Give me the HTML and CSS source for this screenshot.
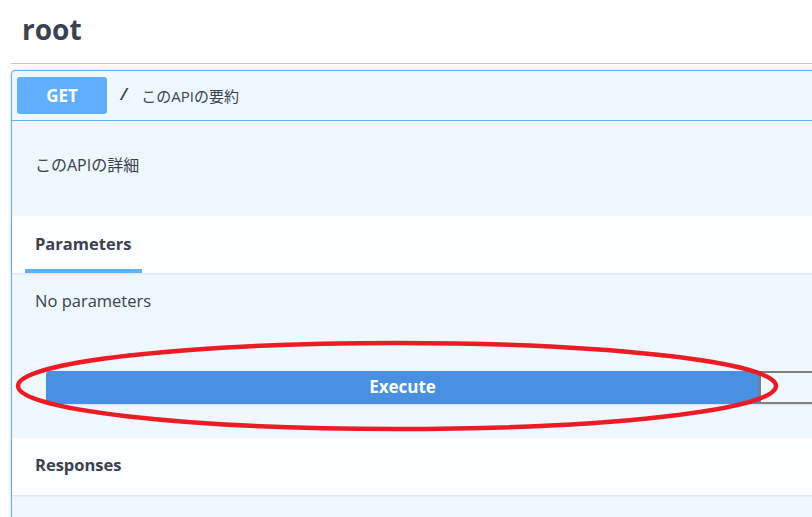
FILE: index.html
```html
<!DOCTYPE html>
<html lang="ja">
<head>
<meta charset="utf-8">
<title>root</title>
<link rel="stylesheet" href="styles.css">
</head>
<body>
<div class="page">
  <div class="tag">
    <h3 class="tag-title">root</h3>
  </div>
  <div class="opblock">
    <div class="summary">
      <span class="method">GET</span>
      <span class="path">/</span>
      <span class="summary-desc">このAPIの要約</span>
    </div>
    <div class="op-body">
      <div class="desc">
        <p>このAPIの詳細</p>
      </div>
      <div class="section-header">
        <div class="tab active"><h4>Parameters</h4></div>
      </div>
      <div class="params">
        <p>No parameters</p>
      </div>
      <div class="btn-group">
        <button class="btn execute">Execute</button>
        <button class="btn clear">Clear</button>
      </div>
      <div class="section-header responses-header">
        <h4 class="plain">Responses</h4>
      </div>
      <div class="responses"></div>
    </div>
  </div>
</div>
<svg class="annotation" width="812" height="517" viewBox="0 0 812 517">
  <ellipse cx="397" cy="386" rx="379" ry="43" fill="none" stroke="#ed1c24" stroke-width="4.5"/>
</svg>
</body>
</html>
```

FILE: styles.css
```css
html, body {
  margin: 0;
  padding: 0;
  background: #ffffff;
  overflow: hidden;
}

body {
  width: 812px;
  height: 517px;
  position: relative;
  font-family: "Open Sans", "Noto Sans CJK JP", sans-serif;
  color: #3b4151;
}

.page {
  width: 1496px;
  padding-left: 11px;
}

.tag {
  border-bottom: 1px solid #c4c6cb;
  padding: 12px 0 17px 11px;
  margin-bottom: 6px;
}

.tag-title {
  margin: 0;
  font-size: 28px;
  line-height: 34px;
  font-weight: 700;
  color: #3b4151;
}

.opblock {
  border: 1px solid #61affe;
  border-radius: 4px;
  background: #eff7ff;
  box-shadow: 0 0 3px rgba(0, 0, 0, 0.19);
  height: 460px;
}

.summary {
  display: flex;
  align-items: center;
  padding: 6px 5px;
  border-bottom: 1px solid #61affe;
}

.method {
  width: 90px;
  height: 37px;
  display: flex;
  align-items: center;
  justify-content: center;
  background: #61affe;
  border-radius: 3px;
  color: #ffffff;
  font-size: 17px;
  font-weight: 700;
}

.path {
  font-family: "Liberation Mono", monospace;
  font-weight: 700;
  font-size: 17px;
  padding: 0 10px 0 12px;
  color: #3b4151;
}

.summary-desc {
  font-size: 15px;
  color: #3b4151;
  padding-left: 2px;
}

.desc {
  padding: 33px 23px 40px;
}

.desc p {
  margin: 0;
  font-size: 16px;
  line-height: 22px;
}

.section-header {
  display: flex;
  align-items: center;
  height: 57px;
  padding: 0 23px;
  background: rgba(255, 255, 255, 0.8);
  box-shadow: 0 1px 2px rgba(0, 0, 0, 0.1);
}

.responses-header {
  padding-bottom: 3px;
  height: 54px;
}

.section-header h4 {
  margin: 0;
  font-size: 16.5px;
  font-weight: 700;
  line-height: 20px;
  color: #3b4151;
}

.tab {
  position: relative;
  align-self: stretch;
  display: flex;
  align-items: center;
  padding-bottom: 1px;
}

.tab.active::after {
  content: "";
  position: absolute;
  left: -10px;
  right: -11px;
  bottom: 0;
  height: 4px;
  background: #61affe;
}

.params {
  padding: 18px 23px 26px;
}

.params p {
  margin: 0;
  font-size: 16.5px;
  line-height: 20px;
}

.btn-group {
  display: flex;
  padding: 34px;
}

.btn {
  flex: 1;
  height: 33px;
  border: 2px solid #808080;
  border-radius: 4px;
  background: transparent;
  font-family: "Open Sans", sans-serif;
  font-size: 17px;
  font-weight: 700;
  color: #3b4151;
  box-shadow: 0 1px 2px rgba(0, 0, 0, 0.1);
  padding: 0 0 2px;
}

.btn.execute {
  background: #4990e2;
  border-color: #4990e2;
  color: #ffffff;
  border-radius: 4px 0 0 4px;
}

.btn.clear {
  border-radius: 0 4px 4px 0;
}

.annotation {
  position: absolute;
  left: 0;
  top: 0;
  pointer-events: none;
}
```
